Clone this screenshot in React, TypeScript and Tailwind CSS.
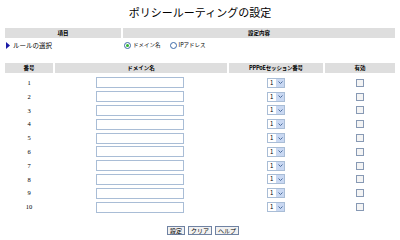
import React from "react";

const ROWS = [1, 2, 3, 4, 5, 6, 7, 8, 9, 10];

function Radio({ checked }: { checked?: boolean }) {
  return (
    <span className="w-[7px] h-[7px] rounded-full border border-[#3d6aa8] bg-white flex items-center justify-center">
      {checked && <span className="w-[3px] h-[3px] rounded-full bg-[#2fb32f]" />}
    </span>
  );
}

function PppoeSelect() {
  return (
    <div className="w-[18px] h-[10px] border border-[#a9bdd6] bg-white flex">
      <span className="flex-1 text-[6px] leading-[8px] pl-[2px] text-black">1</span>
      <span className="w-[8px] h-full bg-[#c9d8f2] flex items-center justify-center">
        <svg width="5" height="3" viewBox="0 0 5 3">
          <path d="M0.5 0.5 L2.5 2.5 L4.5 0.5" stroke="#4d6e9e" strokeWidth="1" fill="none" />
        </svg>
      </span>
    </div>
  );
}

export default function App() {
  return (
    <div
      className="w-[400px] h-[240px] bg-white px-[5px] pt-[6px] text-black"
      style={{ fontFamily: '"Noto Sans CJK JP", "Noto Sans", sans-serif' }}
    >
      {/* Title */}
      <h1 className="text-center text-[11px] leading-[12px] h-[12px]">ポリシールーティングの設定</h1>

      {/* Rule selection */}
      <div className="mt-[10px] grid grid-cols-[116px_272px] gap-x-[2px] text-[5.5px]">
        <div className="h-[10px] bg-[#dedede] text-center leading-[10px] font-bold">項目</div>
        <div className="h-[10px] bg-[#dedede] text-center leading-[10px] font-bold">設定内容</div>
        <div className="h-[14px] flex items-center gap-[3px] pl-[1px]">
          <svg width="4" height="7" viewBox="0 0 4 7">
            <path d="M0 0 L4 3.5 L0 7 Z" fill="#1a1aa6" />
          </svg>
          <span className="text-[6.5px] leading-[8px]">ルールの選択</span>
        </div>
        <div className="h-[14px] flex items-center pl-[1px] leading-[8px]">
          <Radio checked />
          <span className="ml-[2px]">ドメイン名</span>
          <span className="ml-[9px]">
            <Radio />
          </span>
          <span className="ml-[2px]">IPアドレス</span>
        </div>
      </div>

      {/* Domain table */}
      <div className="mt-[11px] grid grid-cols-[48px_172px_94px_70px] gap-x-[2px] text-[5.5px] font-bold">
        <div className="h-[10px] bg-[#dedede] text-center leading-[10px]">番号</div>
        <div className="h-[10px] bg-[#dedede] text-center leading-[10px]">ドメイン名</div>
        <div className="h-[10px] bg-[#dedede] text-center leading-[10px] tracking-[-0.2px]">PPPoEセッション番号</div>
        <div className="h-[10px] bg-[#dedede] text-center leading-[10px]">有効</div>
      </div>
      <div className="mt-[3px] grid grid-cols-[48px_172px_94px_70px] gap-x-[2px] auto-rows-[13.8px]">
        {ROWS.map((n) => (
          <React.Fragment key={n}>
            <div
              className="flex items-center justify-center text-[6.5px]"
              style={{ fontFamily: '"Liberation Serif", serif' }}
            >
              {n}
            </div>
            <div className="flex items-center pl-[41px]">
              <div className="w-[88px] h-[11px] border border-[#a9bdd6] bg-white" />
            </div>
            <div className="flex items-center justify-center">
              <PppoeSelect />
            </div>
            <div className="flex items-center justify-center">
              <div className="w-[8px] h-[8px] border border-[#8799b4] bg-[#f4f4f4]" />
            </div>
          </React.Fragment>
        ))}
      </div>

      {/* Buttons */}
      <div className="mt-[12px] flex justify-center gap-[3px] pl-[6px]">
        {["設定", "クリア", "ヘルプ"].map((b) => (
          <button
            key={b}
            className="h-[9px] px-[2px] border border-[#6f82a3] bg-[#f1f1f1] text-[6px] leading-[7px] text-black"
          >
            {b}
          </button>
        ))}
      </div>
    </div>
  );
}
